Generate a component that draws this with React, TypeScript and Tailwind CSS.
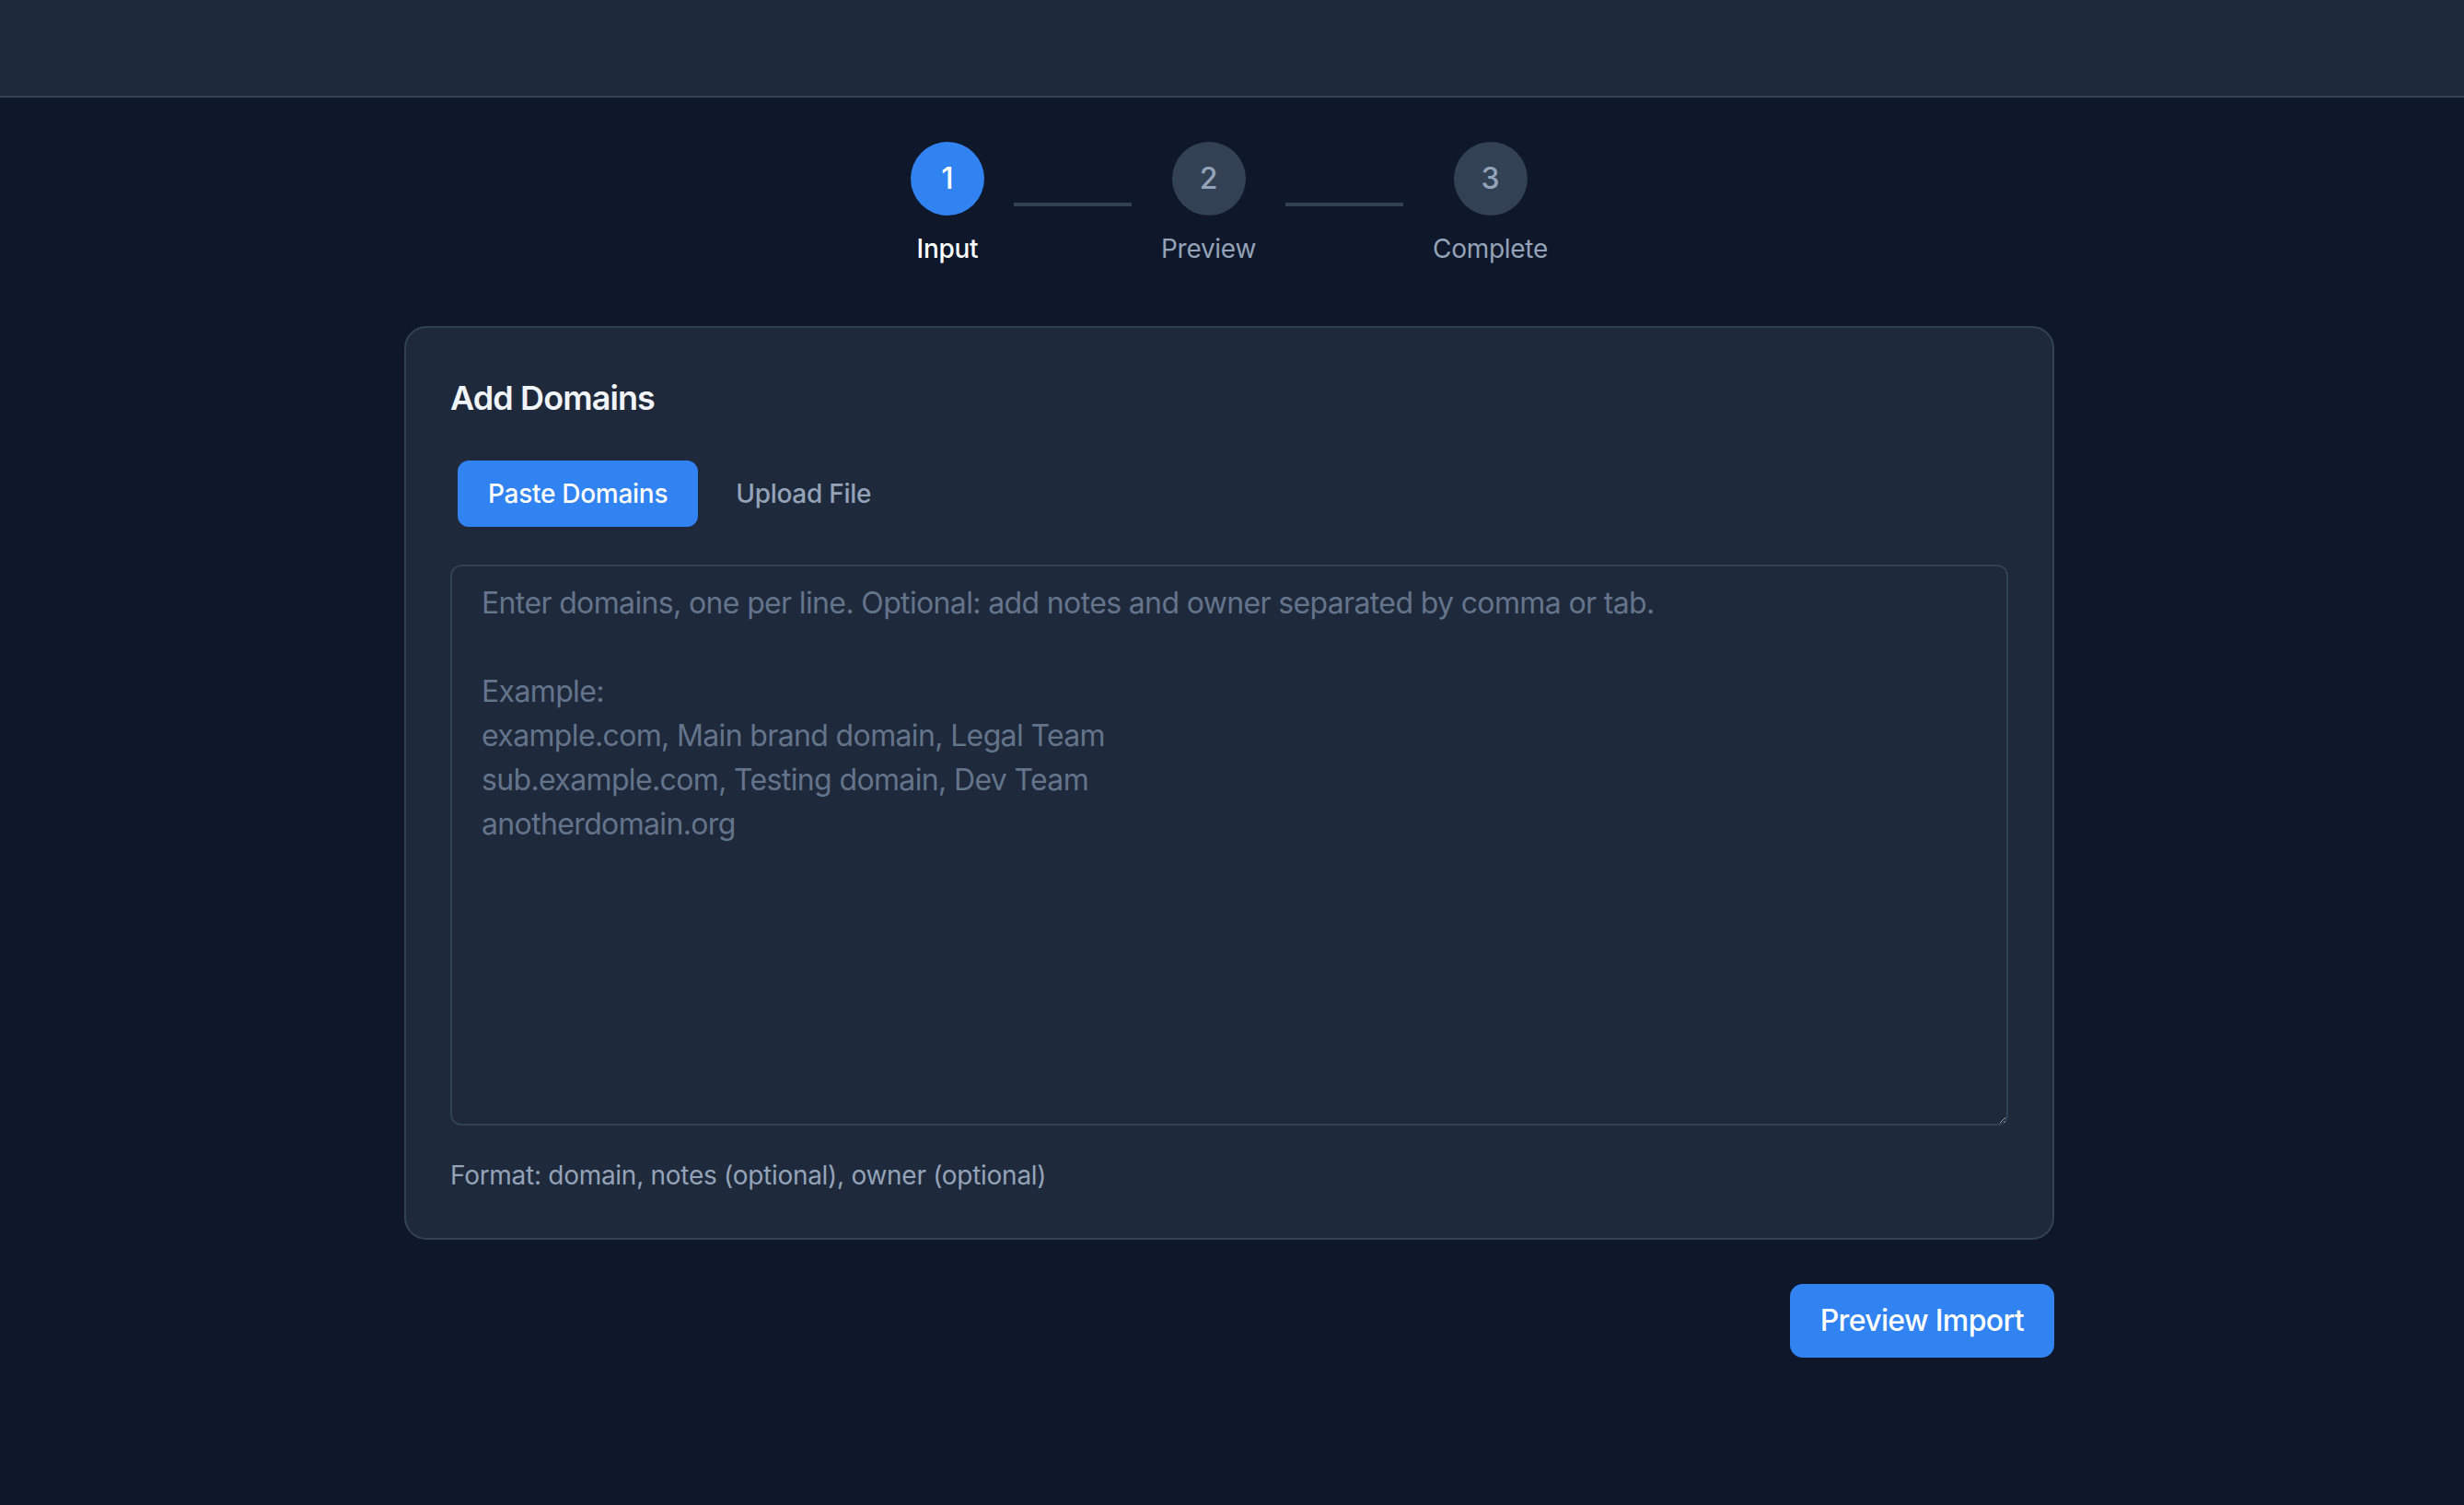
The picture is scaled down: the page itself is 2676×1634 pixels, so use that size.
import React from "react";

const font = { fontFamily: 'Inter, "Noto Sans", sans-serif' } as React.CSSProperties;

function Step({ n, label, active }: { n: number; label: string; active?: boolean }) {
  return (
    <div className="flex flex-col items-center">
      <div
        className={
          active
            ? "flex h-[80px] w-[80px] items-center justify-center rounded-full bg-[#3083f0] text-[32px] font-medium text-white"
            : "flex h-[80px] w-[80px] items-center justify-center rounded-full bg-[#334155] text-[32px] font-medium text-[#94a3b8]"
        }
      >
        {n}
      </div>
      <div
        className={
          active
            ? "mt-[16px] text-[28px] leading-[40px] font-medium tracking-[-0.01em] text-white"
            : "mt-[16px] text-[28px] leading-[40px] tracking-[-0.01em] text-[#94a3b8]"
        }
      >
        {label}
      </div>
    </div>
  );
}

export default function App() {
  const placeholder =
    "Enter domains, one per line. Optional: add notes and owner separated by comma or tab.\n\nExample:\nexample.com, Main brand domain, Legal Team\nsub.example.com, Testing domain, Dev Team\nanotherdomain.org";
  return (
    <div className="min-h-[1634px] bg-[#0f172a]" style={font}>
      <div className="h-[106px] border-b-2 border-[#334155] bg-[#1e293b]" />
      <div className="flex flex-col items-center pt-[48px] pr-[6px]">
        <div className="flex items-center">
          <Step n={1} label="Input" active />
          <div className="mx-[32px] h-[4px] w-[128px] bg-[#334155]" />
          <Step n={2} label="Preview" />
          <div className="mx-[32px] h-[4px] w-[128px] bg-[#334155]" />
          <Step n={3} label="Complete" />
        </div>

        <div className="mt-[64px] w-[1792px] rounded-[24px] border-2 border-[#334155] bg-[#1e293b] p-[48px]">
          <h2 className="text-[36px] leading-[56px] font-semibold tracking-[-0.025em] text-[#f1f5f9]">Add Domains</h2>
          <div className="mt-[32px] flex gap-[8px] p-[8px]">
            <button className="h-[72px] rounded-[12px] bg-[#3083f0] px-[33px] text-[28px] font-medium tracking-[-0.01em] text-white">
              Paste Domains
            </button>
            <button className="h-[72px] rounded-[12px] px-[33px] text-[28px] font-medium tracking-[-0.01em] text-[#94a3b8]">
              Upload File
            </button>
          </div>
          <textarea
            className="mt-[33px] block h-[609px] w-full rounded-[12px] border-2 border-[#334155] bg-[#1e293b] px-[32px] py-[16px] text-[32px] leading-[48px] tracking-[-0.02em] text-[#e2e8f0] outline-none placeholder:text-[#64748b]"
            placeholder={placeholder}
          />
          <p className="mt-[34px] text-[28px] leading-[40px] tracking-[-0.01em] text-[#94a3b8]">
            Format: domain, notes (optional), owner (optional)
          </p>
        </div>

        <div className="mt-[48px] flex w-[1792px] justify-end">
          <button className="h-[80px] rounded-[14px] bg-[#3083f0] px-[33px] text-[32px] font-medium tracking-[-0.02em] text-white">
            Preview Import
          </button>
        </div>
      </div>
    </div>
  );
}
